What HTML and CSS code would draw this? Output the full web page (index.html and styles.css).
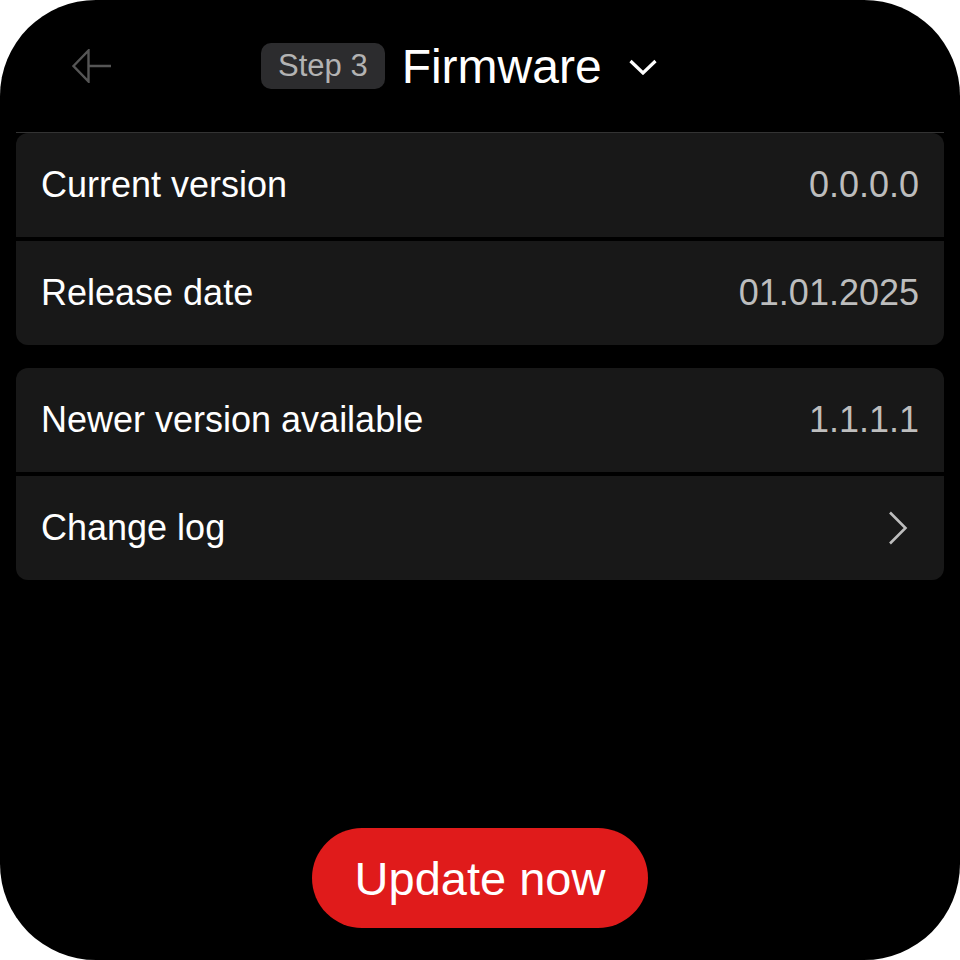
FILE: index.html
```html
<!DOCTYPE html>
<html lang="en">

<head>
    <meta charset="utf-8">
    <meta name="viewport" content="width=device-width, initial-scale=1.0">
    <title>Firmware</title>
    <link rel="stylesheet" href="styles.css">
</head>

<body>

    <div class="skaerm">

        <header>
            <button class="tilbage" aria-label="Back">
                <svg width="40" height="34" viewBox="0 0 40 34">
                    <path d="M1.5 17 L16.5 1.5 L16.5 32.5 Z M16.5 17 L39 17" fill="none" stroke="#555" stroke-width="2.4" stroke-linejoin="miter"/>
                </svg>
            </button>

            <div class="titel">
                <span class="trin">Step 3</span>
                <h1>Firmware</h1>
                <svg class="pil-ned" width="28" height="16" viewBox="0 0 28 16">
                    <path d="M1.5 2 L14 14 L26.5 2" fill="none" stroke="#fff" stroke-width="3.2"/>
                </svg>
            </div>
        </header>

        <section class="gruppe">
            <div class="raekke">
                <span>Current version</span>
                <span class="vaerdi">0.0.0.0</span>
            </div>
            <div class="raekke">
                <span>Release date</span>
                <span class="vaerdi">01.01.2025</span>
            </div>
        </section>

        <section class="gruppe">
            <div class="raekke">
                <span>Newer version available</span>
                <span class="vaerdi">1.1.1.1</span>
            </div>
            <div class="raekke">
                <span>Change log</span>
                <svg class="pil-hoejre" width="20" height="34" viewBox="0 0 20 34">
                    <path d="M2 1.5 L17.5 17 L2 32.5" fill="none" stroke="#bdbdbd" stroke-width="2.6"/>
                </svg>
            </div>
        </section>

        <footer>
            <button class="opdater">Update now</button>
        </footer>

    </div>

</body>

</html>
```

FILE: styles.css
```css
* {
    box-sizing: border-box;
    padding: 0;
    margin: 0;
}

body {
    background: white;
    font-family: "Liberation Sans", Arial, sans-serif;
}

.skaerm {
    width: 960px;
    height: 960px;
    background: #000;
    border-radius: 96px;
    display: flex;
    flex-direction: column;
    padding: 0 16px;
    overflow: hidden;
}

header {
    height: 133px;
    border-bottom: 1px solid #333;
    display: flex;
    align-items: center;
    padding-left: 56px;
}

.tilbage {
    background: none;
    border: none;
    width: 40px;
    height: 34px;
    display: flex;
}

.titel {
    display: flex;
    align-items: center;
    margin-left: 149px;
}

.trin {
    background: #2c2c2e;
    color: #b3b3b3;
    font-size: 31px;
    border-radius: 10px;
    height: 46px;
    line-height: 46px;
    padding: 0 17px;
}

h1 {
    color: white;
    font-weight: normal;
    font-size: 48px;
    margin-left: 17px;
}

.pil-ned {
    margin-left: 27px;
    margin-top: 2px;
}

.gruppe {
    display: flex;
    flex-direction: column;
    gap: 4px;
    border-radius: 12px;
    overflow: hidden;
    margin-bottom: 23px;
}

.raekke {
    background: #181818;
    height: 104px;
    display: flex;
    align-items: center;
    justify-content: space-between;
    padding: 0 25px;
    color: white;
    font-size: 36px;
}

.vaerdi {
    color: #bdbdbd;
}

.pil-hoejre {
    margin-right: 11px;
}

footer {
    margin-top: auto;
    display: flex;
    justify-content: center;
    padding-bottom: 32px;
}

.opdater {
    background: #e01b1b;
    color: white;
    border: none;
    border-radius: 50px;
    width: 336px;
    height: 100px;
    font-family: "Liberation Sans", Arial, sans-serif;
    font-size: 47px;
}
```
